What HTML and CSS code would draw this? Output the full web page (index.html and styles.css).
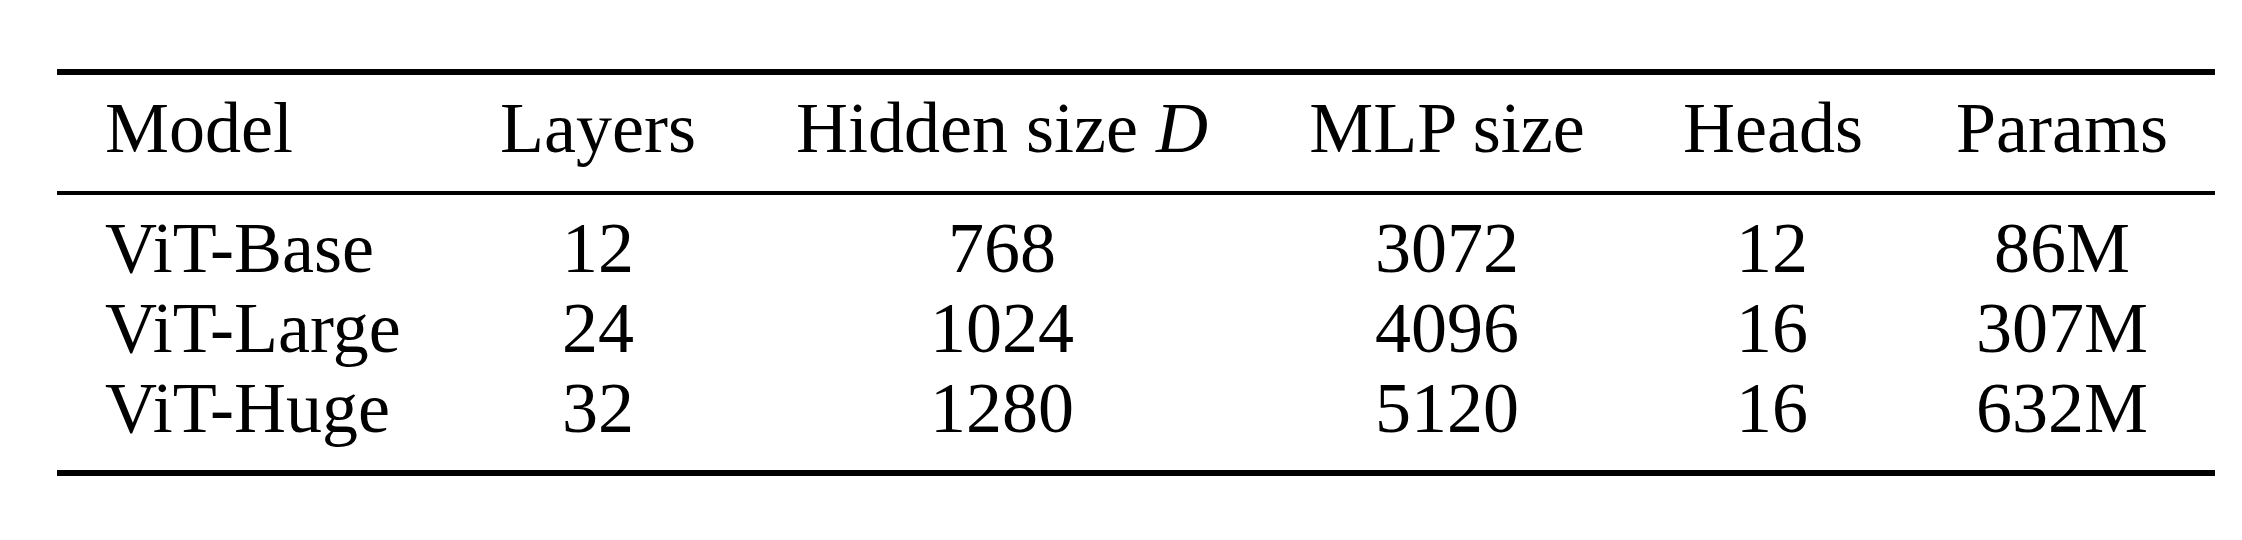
FILE: index.html
```html
<!DOCTYPE html>
<html>
<head>
<meta charset="utf-8">
<link rel="stylesheet" href="styles.css">
</head>
<body>
<div class="page">
  <table class="spec">
    <colgroup>
      <col class="c1"><col class="c2"><col class="c3"><col class="c4"><col class="c5"><col class="c6">
    </colgroup>
    <thead>
      <tr>
        <th class="left">Model</th>
        <th>Layers</th>
        <th>Hidden size <i class="math">D</i></th>
        <th>MLP size</th>
        <th>Heads</th>
        <th>Params</th>
      </tr>
    </thead>
    <tbody>
      <tr class="first">
        <td class="left">ViT-Base</td><td>12</td><td>768</td><td>3072</td><td>12</td><td>86M</td>
      </tr>
      <tr>
        <td class="left">ViT-Large</td><td>24</td><td>1024</td><td>4096</td><td>16</td><td>307M</td>
      </tr>
      <tr class="last">
        <td class="left">ViT-Huge</td><td>32</td><td>1280</td><td>5120</td><td>16</td><td>632M</td>
      </tr>
    </tbody>
  </table>
</div>
</body>
</html>
```
FILE: styles.css
```css
html, body {
  margin: 0;
  padding: 0;
  background: #ffffff;
}

.page {
  padding: 69px 0 0 57px;
}

.spec {
  width: 2158px;
  table-layout: fixed;
  border-collapse: collapse;
  font-family: "Liberation Serif", "Times New Roman", serif;
  font-size: 72px;
  line-height: 80px;
  color: #000;
  border-top: 6px solid #000;
  border-bottom: 6px solid #000;
}

.c1 { width: 392px; }
.c2 { width: 296px; }
.c3 { width: 512px; }
.c4 { width: 378px; }
.c5 { width: 272px; }
.c6 { width: 308px; }

.spec th,
.spec td {
  font-weight: normal;
  text-align: center;
  padding: 0 46px 0 48px;
  white-space: nowrap;
}

.spec .left {
  text-align: left;
}

.spec thead th {
  padding-top: 13px;
  padding-bottom: 23px;
  border-bottom: 4px solid #000;
}

.spec tr.first td {
  padding-top: 13px;
}

.spec tr.last td {
  padding-bottom: 22px;
}

.math {
  font-style: italic;
}
```
